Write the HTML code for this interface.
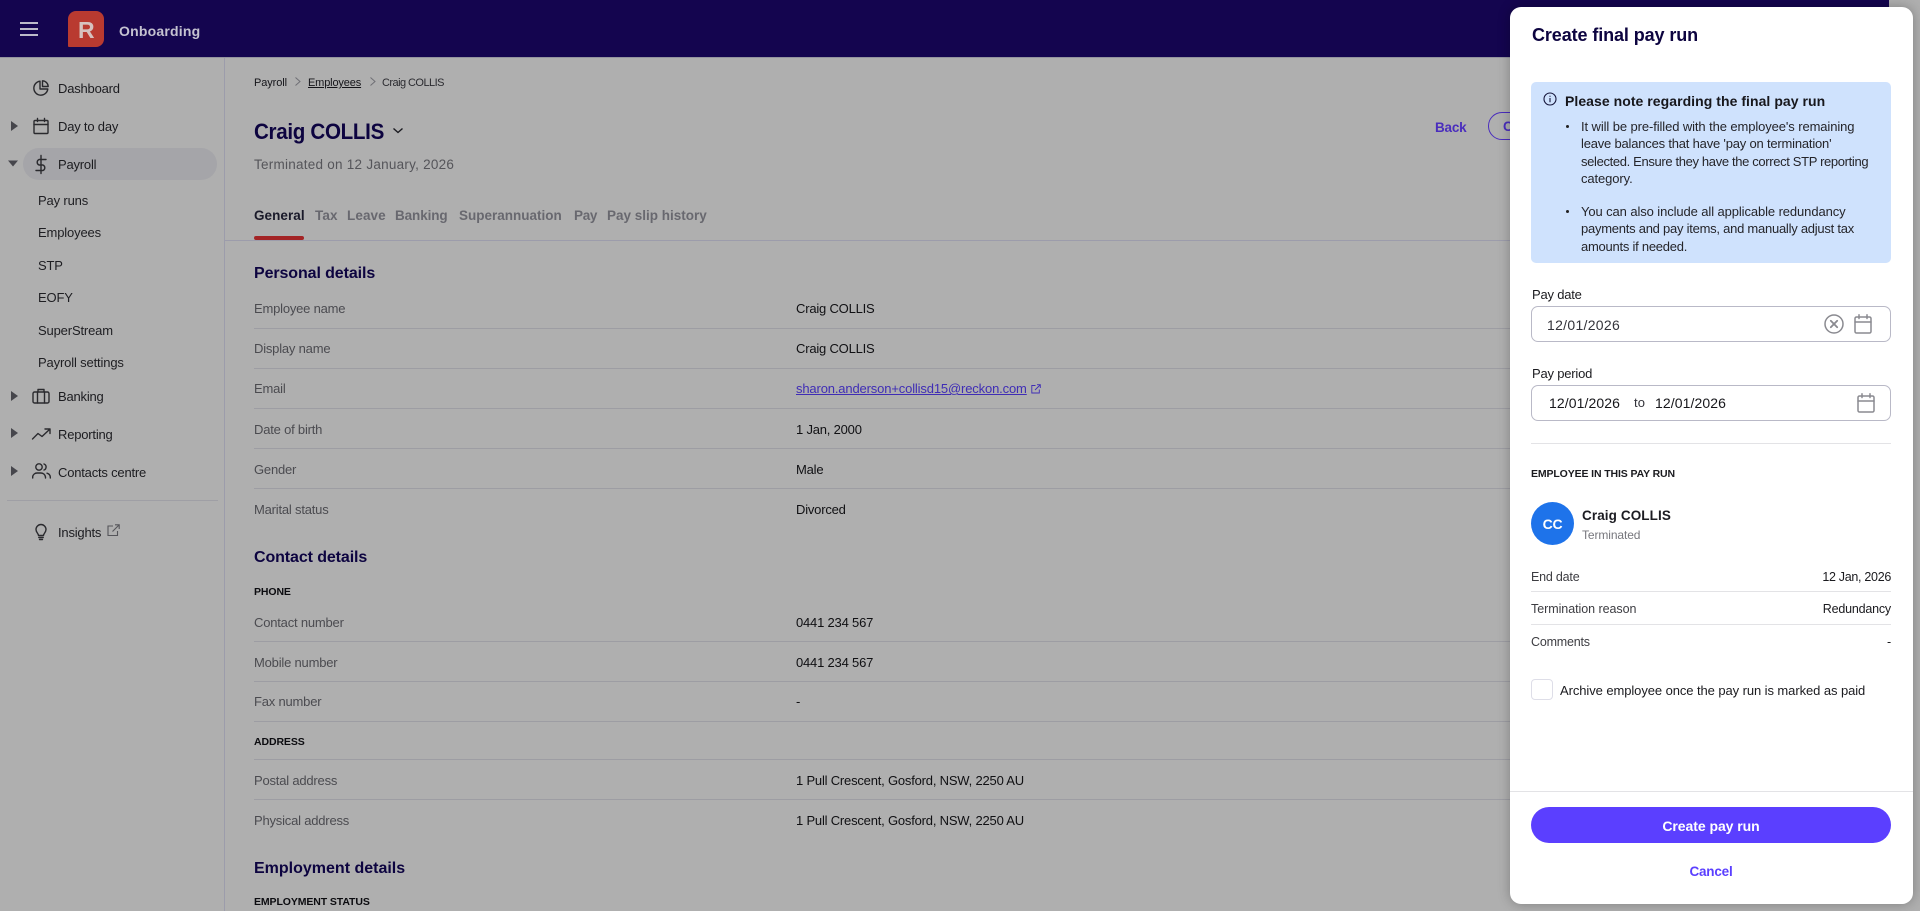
<!DOCTYPE html>
<html lang="en"><head><meta charset="utf-8"><title>Create final pay run</title>
<style>
html,body{margin:0;padding:0;width:1920px;height:911px;overflow:hidden;background:#afafaf;font-family:"Liberation Sans","Noto Sans CJK JP",sans-serif}
#p{position:relative;width:1920px;height:911px;overflow:hidden;background:#afafaf}
.t{position:absolute;white-space:nowrap;line-height:20px;height:20px;font-size:13px;color:#1b1b1f;letter-spacing:-.2px;margin-top:1px}
.n{margin-top:0}
.b{position:absolute;display:block}
.nav{color:#1c1c20}
.sub{color:#1e1e22;letter-spacing:-.15px}
.l{left:254px;color:#4b4b50}
.v{left:796px;color:#101013}
.line{position:absolute;left:254px;width:1260px;height:1px;background:#9d9da3}
.h{left:254px;font-size:16px;font-weight:700;color:#0d0440;letter-spacing:-.1px}
.cap{left:254px;font-size:10.5px;font-weight:700;color:#0c0c10;letter-spacing:-.1px}
.tab{top:206px;font-size:13.5px;font-weight:700;color:#68686f;letter-spacing:.1px;margin-top:0}
svg{position:absolute;display:block;overflow:visible}
.ic{fill:none;stroke:#2a2a2e;stroke-width:1.4;stroke-linecap:round;stroke-linejoin:round}
#panel{position:absolute;left:1510px;top:7px;width:403px;height:897px;background:#fff;border-radius:11px;box-shadow:0 0 12px rgba(0,0,0,.28)}
#panel .t{color:#26262b}
.g{fill:none;stroke:#8a8a90;stroke-width:1.5;stroke-linecap:round;stroke-linejoin:round}
.bt{left:1581px;font-size:13px;color:#25252a;letter-spacing:-.1px}
.m{left:1531px;font-size:12.5px;color:#3d3d42}
</style></head><body><div id="p">

<!-- header -->
<div class="b" style="left:0;top:0;width:1889px;height:57px;background:#14054f;border-bottom:1px solid #94949f;box-sizing:content-box"></div>
<div class="b" style="left:20px;top:22px;width:18px;height:2px;background:#bcbbc9"></div>
<div class="b" style="left:20px;top:28px;width:18px;height:2px;background:#bcbbc9"></div>
<div class="b" style="left:20px;top:34px;width:18px;height:2px;background:#bcbbc9"></div>
<div class="b" style="left:68px;top:11px;width:36px;height:36px;background:#b93a30;border-radius:8px 8px 8px 1px"></div>
<div class="t" style="left:78px;top:19px;font-size:23px;color:#d6c2bf;font-weight:700;letter-spacing:0">R</div>
<div class="t" style="left:119px;top:20px;font-size:14px;font-weight:700;color:#c5c3d1;letter-spacing:.2px">Onboarding</div>

<!-- sidebar -->
<div class="b" style="left:224px;top:58px;width:1px;height:853px;background:#9c9cab"></div>
<div class="b" style="left:23px;top:148px;width:194px;height:32px;background:#a5a5a9;border-radius:16px"></div>

<svg width="16" height="16" style="left:33px;top:80px" viewBox="0 0 16 16"><path class="ic" d="M7 1.2A7 7 0 1 0 14.8 9H7Z"/><path class="ic" d="M9.5 .8A6 6 0 0 1 15.2 6.5H9.5Z"/></svg>
<div class="t nav" style="left:58px;top:78px">Dashboard</div>

<svg width="10" height="12" style="left:10px;top:120px"><path d="M1 1L8 6L1 11Z" fill="#46464c"/></svg>
<svg width="16" height="16" style="left:33px;top:118px" viewBox="0 0 16 16"><rect class="ic" x="1" y="2.5" width="14" height="13" rx="1"/><path class="ic" d="M1 6.5H15M4.5 .5V3.5M11.5 .5V3.5"/></svg>
<div class="t nav" style="left:58px;top:116px">Day to day</div>

<svg width="12" height="8" style="left:8px;top:160px"><path d="M0 .5H10L5 6.5Z" fill="#46464c"/></svg>
<svg width="14" height="20" style="left:34px;top:155px" viewBox="0 0 14 20"><path class="ic" d="M7 .5V18.5M12 4.5H5A3 3 0 0 0 5 10H9A3 3 0 0 1 9 15.5H2"/></svg>
<div class="t nav" style="left:58px;top:154px">Payroll</div>

<div class="t sub" style="left:38px;top:190px">Pay runs</div>
<div class="t sub" style="left:38px;top:222px">Employees</div>
<div class="t sub" style="left:38px;top:255px">STP</div>
<div class="t sub" style="left:38px;top:287px">EOFY</div>
<div class="t sub" style="left:38px;top:320px">SuperStream</div>
<div class="t sub" style="left:38px;top:352px">Payroll settings</div>

<svg width="10" height="12" style="left:10px;top:390px"><path d="M1 1L8 6L1 11Z" fill="#46464c"/></svg>
<svg width="18" height="16" style="left:32px;top:388px" viewBox="0 0 18 16"><rect class="ic" x="1" y="4" width="16" height="11" rx="1.5"/><path class="ic" d="M5.5 4V15M12.5 4V15M6 4V1.5H12V4"/></svg>
<div class="t nav" style="left:58px;top:386px">Banking</div>

<svg width="10" height="12" style="left:10px;top:427px"><path d="M1 1L8 6L1 11Z" fill="#46464c"/></svg>
<svg width="19" height="12" style="left:32px;top:428px" viewBox="0 0 19 12"><path class="ic" d="M.5 11L6 5.5L10 8.5L17.5 1.5M13 1H18V5.5"/></svg>
<div class="t nav" style="left:58px;top:424px">Reporting</div>

<svg width="10" height="12" style="left:10px;top:465px"><path d="M1 1L8 6L1 11Z" fill="#46464c"/></svg>
<svg width="19" height="16" style="left:32px;top:463px" viewBox="0 0 19 16"><circle class="ic" cx="7" cy="4" r="3.2"/><path class="ic" d="M.7 15V13.5A4.5 4.5 0 0 1 5 10H9A4.5 4.5 0 0 1 13.5 14V15M12 1A3.2 3.2 0 0 1 12 7M15 10.2A4.5 4.5 0 0 1 18.3 14V15"/></svg>
<div class="t nav" style="left:58px;top:462px">Contacts centre</div>

<div class="b" style="left:7px;top:500px;width:211px;height:1px;background:#9f9fa5"></div>
<svg width="12" height="17" style="left:35px;top:524px" viewBox="0 0 12 17"><path class="ic" d="M3.5 11.5C3.5 9.5 1 8.5 1 5.5A5 5 0 0 1 11 5.5C11 8.5 8.5 9.5 8.5 11.5ZM3.8 13.5H8.2M4.5 15.5H7.5"/></svg>
<div class="t nav" style="left:58px;top:522px">Insights</div>
<svg width="13" height="13" style="left:107px;top:524px" viewBox="0 0 13 13"><path d="M6 2H1V11.5H10.5V7M5.5 7.5L12 1M8 .8H12.2V5" fill="none" stroke="#55555a" stroke-width="1.1"/></svg>

<!-- main -->
<div class="t n" style="left:254px;top:73px;font-size:11px;color:#15151a;letter-spacing:-.1px">Payroll</div>
<svg width="8" height="12" style="left:294px;top:76px"><path d="M1.5 1.5L6 5.5L1.5 9.5" fill="none" stroke="#6f6f75"/></svg>
<div class="t n" style="left:308px;top:73px;font-size:11px;color:#15151a;letter-spacing:-.15px;text-decoration:underline">Employees</div>
<svg width="8" height="12" style="left:369px;top:76px"><path d="M1.5 1.5L6 5.5L1.5 9.5" fill="none" stroke="#6f6f75"/></svg>
<div class="t n" style="left:382px;top:73px;font-size:11px;color:#2b2b30;letter-spacing:-.55px">Craig COLLIS</div>

<div class="t" style="left:254px;top:121px;font-size:22.5px;font-weight:700;color:#0d0440;letter-spacing:-.35px;transform:scaleX(.915);transform-origin:0 50%">Craig COLLIS</div>
<svg width="12" height="8" style="left:392px;top:127px"><path d="M1.5 1.5L6 5.5L10.5 1.5" fill="none" stroke="#1a1a20" stroke-width="1.4"/></svg>
<div class="t" style="left:254px;top:154px;font-size:13.5px;color:#55555a;letter-spacing:.25px">Terminated on 12 January, 2026</div>

<div class="t tab" style="left:254px;color:#1a1a2a;letter-spacing:.05px">General</div>
<div class="t tab" style="left:315px">Tax</div>
<div class="t tab" style="left:347px">Leave</div>
<div class="t tab" style="left:395px;letter-spacing:-.1px">Banking</div>
<div class="t tab" style="left:459px;letter-spacing:0">Superannuation</div>
<div class="t tab" style="left:574px;letter-spacing:-.3px">Pay</div>
<div class="t tab" style="left:607px;letter-spacing:0">Pay slip history</div>
<div class="b" style="left:225px;top:240px;width:1290px;height:1px;background:#9c9cab"></div>
<div class="b" style="left:254px;top:236px;width:50px;height:4px;background:#a32425;border-radius:2px"></div>

<div class="t h" style="top:263px">Personal details</div>

<div class="t l" style="top:298px">Employee name</div><div class="t v" style="top:298px">Craig COLLIS</div><div class="line" style="top:328px"></div>
<div class="t l" style="top:338px">Display name</div><div class="t v" style="top:338px">Craig COLLIS</div><div class="line" style="top:368px"></div>
<div class="t l" style="top:378px">Email</div><div class="t v" style="top:378px;color:#3f2db5;text-decoration:underline;letter-spacing:-.15px">sharon.anderson+collisd15@reckon.com</div>
<svg width="10" height="10" style="left:1031px;top:384px" viewBox="0 0 10 10"><path d="M4.5 1.5H.8V9H8.3V5.5M4 6L9 1M6 .7H9.3V4" fill="none" stroke="#3f2db5" stroke-width=".9"/></svg>
<div class="line" style="top:408px"></div>
<div class="t l" style="top:419px">Date of birth</div><div class="t v" style="top:419px">1 Jan, 2000</div><div class="line" style="top:448px"></div>
<div class="t l" style="top:459px">Gender</div><div class="t v" style="top:459px">Male</div><div class="line" style="top:488px"></div>
<div class="t l" style="top:499px">Marital status</div><div class="t v" style="top:499px">Divorced</div>

<div class="t h" style="top:547px">Contact details</div>
<div class="t cap" style="top:581px">PHONE</div>
<div class="t l" style="top:612px">Contact number</div><div class="t v" style="top:612px">0441 234 567</div><div class="line" style="top:641px"></div>
<div class="t l" style="top:652px">Mobile number</div><div class="t v" style="top:652px">0441 234 567</div><div class="line" style="top:681px"></div>
<div class="t l" style="top:691px">Fax number</div><div class="t v" style="top:691px">-</div><div class="line" style="top:721px"></div>
<div class="t cap" style="top:731px">ADDRESS</div><div class="line" style="top:759px"></div>
<div class="t l" style="top:770px">Postal address</div><div class="t v" style="top:770px">1 Pull Crescent, Gosford, NSW, 2250 AU</div><div class="line" style="top:799px"></div>
<div class="t l" style="top:810px">Physical address</div><div class="t v" style="top:810px">1 Pull Crescent, Gosford, NSW, 2250 AU</div>

<div class="t h" style="top:858px;letter-spacing:0">Employment details</div>
<div class="t cap" style="top:891px">EMPLOYMENT STATUS</div>

<div class="t" style="left:1435px;top:117px;font-size:13.5px;font-weight:700;color:#4a2dbd">Back</div>
<div class="b" style="left:1488px;top:112px;width:60px;height:28px;box-sizing:border-box;border:1px solid #4a2dbd;border-radius:15px"></div>
<div class="t" style="left:1503px;top:116px;font-size:13.5px;font-weight:700;color:#4a2dbd">C</div>

<!-- panel -->
<div id="panel"></div>
<div class="t n" style="left:1532px;top:25px;font-size:18px;font-weight:700;color:#0d0440;letter-spacing:-.1px">Create final pay run</div>

<div class="b" style="left:1531px;top:82px;width:360px;height:181px;background:#cfe2fd;border-radius:5px"></div>
<svg width="14" height="14" style="left:1543px;top:92px" viewBox="0 0 14 14"><circle cx="7" cy="7" r="6" fill="none" stroke="#15153a" stroke-width="1.1"/><path d="M7 6V10.2M7 3.8V4.8" stroke="#15153a" stroke-width="1.1"/></svg>
<div class="t n" style="left:1565px;top:91px;font-size:14px;font-weight:700;color:#17171c;letter-spacing:.05px">Please note regarding the final pay run</div>
<div class="b" style="left:1566px;top:125px;width:3px;height:3px;border-radius:50%;background:#222"></div>
<div class="t n bt" style="top:117px">It will be pre-filled with the employee's remaining</div>
<div class="t n bt" style="top:134px;letter-spacing:-.2px">leave balances that have 'pay on termination'</div>
<div class="t n bt" style="top:152px;letter-spacing:-.35px">selected. Ensure they have the correct STP reporting</div>
<div class="t n bt" style="top:169px">category.</div>
<div class="b" style="left:1566px;top:210px;width:3px;height:3px;border-radius:50%;background:#222"></div>
<div class="t n bt" style="top:202px">You can also include all applicable redundancy</div>
<div class="t n bt" style="top:219px;letter-spacing:-.25px">payments and pay items, and manually adjust tax</div>
<div class="t n bt" style="top:237px;letter-spacing:-.25px">amounts if needed.</div>

<div class="t" style="left:1532px;top:284px;font-size:13px">Pay date</div>
<div class="b" style="left:1531px;top:306px;width:360px;height:36px;box-sizing:border-box;border:1px solid #b9b9c7;border-radius:7px;background:#fff"></div>
<div class="t n" style="left:1547px;top:315px;font-size:14px;letter-spacing:.3px;color:#33333a">12/01/2026</div>
<svg width="20" height="20" style="left:1824px;top:314px" viewBox="0 0 20 20"><circle class="g" cx="10" cy="10" r="9"/><path class="g" style="stroke-width:1.8" d="M6.8 6.8L13.2 13.2M13.2 6.8L6.8 13.2"/></svg>
<svg width="18" height="20" style="left:1854px;top:314px" viewBox="0 0 18 20"><rect class="g" x="1" y="3" width="16" height="16" rx="1.5"/><path class="g" d="M1 8H17M5 .8V4.5M13 .8V4.5"/></svg>

<div class="t" style="left:1532px;top:363px;font-size:13px">Pay period</div>
<div class="b" style="left:1531px;top:385px;width:360px;height:36px;box-sizing:border-box;border:1px solid #b9b9c7;border-radius:7px;background:#fff"></div>
<div class="t n" style="left:1549px;top:393px;font-size:14px;letter-spacing:.1px;color:#17171b">12/01/2026</div>
<div class="t n" style="left:1634px;top:393px;font-size:13px;letter-spacing:.2px;color:#33333a">to</div>
<div class="t n" style="left:1655px;top:393px;font-size:14px;letter-spacing:.1px;color:#17171b">12/01/2026</div>
<svg width="18" height="20" style="left:1857px;top:393px" viewBox="0 0 18 20"><rect class="g" x="1" y="3" width="16" height="16" rx="1.5"/><path class="g" d="M1 8H17M5 .8V4.5M13 .8V4.5"/></svg>

<div class="b" style="left:1531px;top:443px;width:360px;height:1px;background:#e3e3e6"></div>
<div class="t" style="left:1531px;top:463px;font-size:10.5px;font-weight:700;letter-spacing:-.12px">EMPLOYEE IN THIS PAY RUN</div>
<div class="b" style="left:1531px;top:502px;width:43px;height:43px;border-radius:50%;background:#1e73ea"></div>
<div class="t" style="left:1531px;width:43px;text-align:center;top:513px;font-size:14px;font-weight:700;letter-spacing:-.2px"><span style="color:#fff">CC</span></div>
<div class="t" style="left:1582px;top:505px;font-size:13.5px;font-weight:700;color:#1c1c22;letter-spacing:.1px">Craig COLLIS</div>
<div class="t" style="left:1582px;top:524px;font-size:12px;color:#77777d;letter-spacing:-.1px">Terminated</div>

<div class="t m" style="top:566px">End date</div>
<div class="t" style="right:29px;top:566px;font-size:12.5px;letter-spacing:-.3px">12 Jan, 2026</div>
<div class="b" style="left:1531px;top:591px;width:360px;height:1px;background:#e3e3e6"></div>
<div class="t m" style="top:598px;letter-spacing:-.05px">Termination reason</div>
<div class="t" style="right:29px;top:598px;font-size:12.5px">Redundancy</div>
<div class="b" style="left:1531px;top:624px;width:360px;height:1px;background:#e3e3e6"></div>
<div class="t m" style="top:631px">Comments</div>
<div class="t" style="right:29px;top:631px;font-size:12.5px">-</div>

<div class="b" style="left:1531px;top:679px;width:22px;height:21px;box-sizing:border-box;border:1px solid #dedee8;border-radius:4px;background:#fff"></div>
<div class="t" style="left:1560px;top:680px;font-size:13px;letter-spacing:-.08px">Archive employee once the pay run is marked as paid</div>

<div class="b" style="left:1510px;top:791px;width:403px;height:1px;background:#e3e3e6"></div>
<div class="b" style="left:1531px;top:807px;width:360px;height:36px;border-radius:18px;background:#5b3fff"></div>
<div class="t" style="left:1531px;width:360px;text-align:center;top:815px;font-size:14px;font-weight:700;letter-spacing:-.05px"><span style="color:#fff">Create pay run</span></div>
<div class="t n" style="left:1531px;width:360px;text-align:center;top:862px;font-size:13.5px;font-weight:700"><span style="color:#5b3fff">Cancel</span></div>

</div></body></html>
